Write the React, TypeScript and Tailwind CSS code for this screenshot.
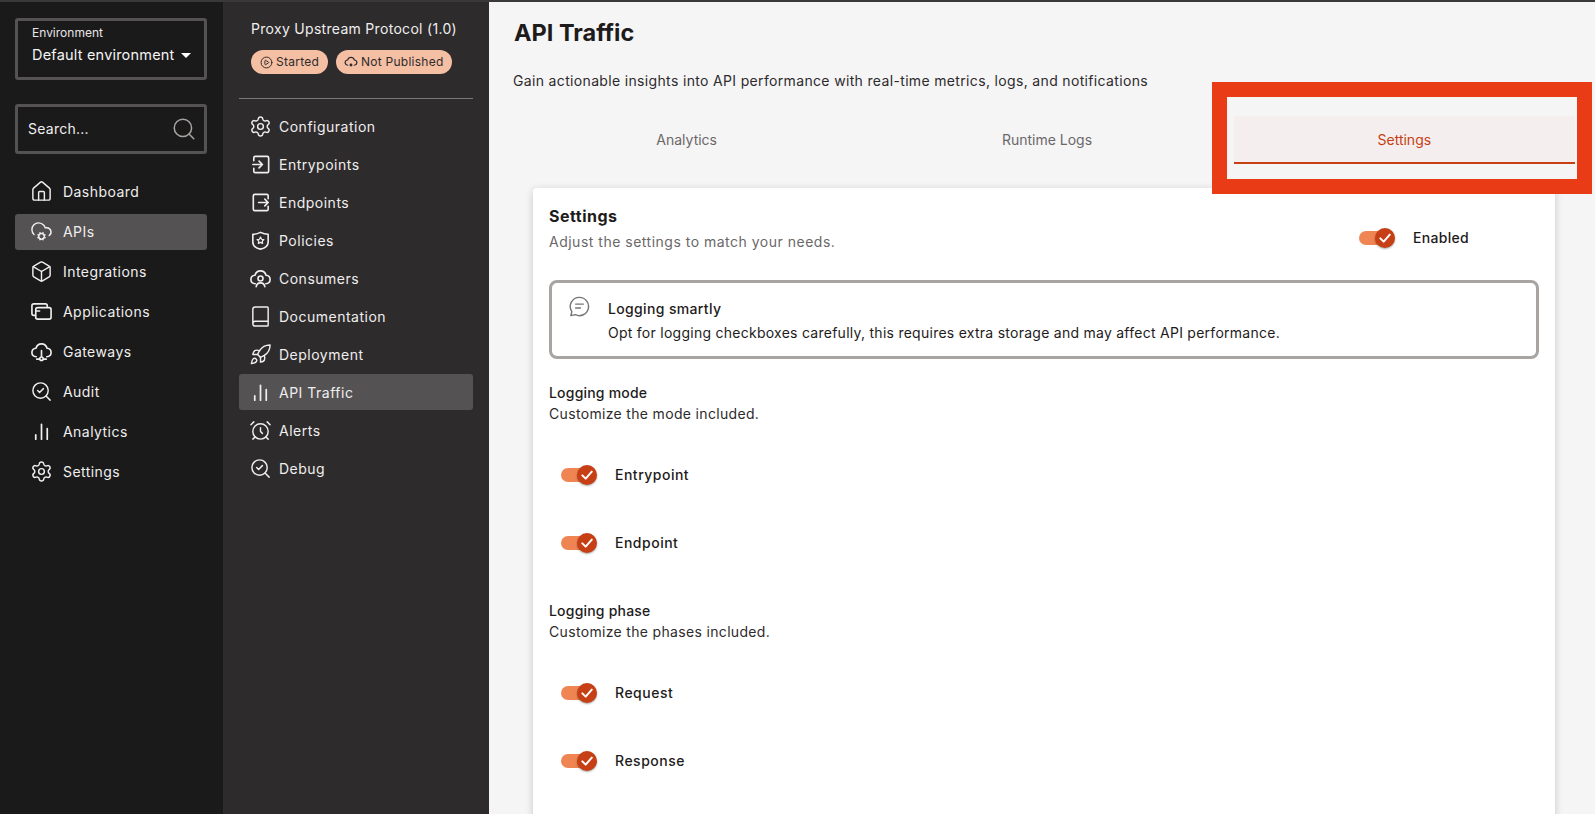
import React from 'react';
import { AlarmClock, Book, Box, CirclePlay, CloudCog, House, Rocket, Search, SearchCheck, Settings } from 'lucide-react';

type IconType = React.ComponentType<{ className?: string; strokeWidth?: number }>;

const baseSvg = {
  viewBox: '0 0 24 24',
  fill: 'none',
  stroke: 'currentColor',
  strokeWidth: 1.7,
  strokeLinecap: 'round' as const,
  strokeLinejoin: 'round' as const,
};

const CLOUD = 'M6.5 17.5C3.8 17.2 2 15.3 2 13c0-2.3 1.8-4.2 4.2-4.4C7 5.8 9.3 4 12 4s5 1.8 5.8 4.6c2.4.2 4.2 2.1 4.2 4.4 0 2.3-1.8 4.2-4.5 4.5';

const BarsIcon = ({ className }: { className?: string }) => (
  <svg {...baseSvg} className={className} strokeWidth={1.8}>
    <path d="M6 15.5v4.500M12 4.500V20M18 9v11" />
  </svg>
);

const AppsIcon = ({ className }: { className?: string }) => (
  <svg {...baseSvg} className={className}>
    <path d="M5 16H4a2 2 0 0 1-2-2V6a2 2 0 0 1 2-2h12a2 2 0 0 1 2 2v1" />
    <rect x="6" y="8" width="16" height="12" rx="2" />
    <path d="M6 11.5h4" />
  </svg>
);

const GatewayIcon = ({ className }: { className?: string }) => (
  <svg {...baseSvg} className={className}>
    <path d={CLOUD} />
    <path d="M12 11v6M7 20h3M14 20h3" />
    <circle cx="12" cy="19.5" r="1.8" />
  </svg>
);

const EntryIcon = ({ className }: { className?: string }) => (
  <svg {...baseSvg} className={className}>
    <path d="M5 8V5a1.5 1.5 0 0 1 1.5-1.5H19A1.5 1.5 0 0 1 20.5 5v14a1.5 1.5 0 0 1-1.5 1.5H6.5A1.5 1.5 0 0 1 5 19v-3" />
    <path d="M4 12h10M10.5 8.5 14 12l-3.5 3.5" />
  </svg>
);

const EndIcon = ({ className }: { className?: string }) => (
  <svg {...baseSvg} className={className}>
    <path d="M20 8V5a1.5 1.5 0 0 0-1.5-1.5H6A1.5 1.5 0 0 0 4.5 5v14A1.5 1.5 0 0 0 6 20.5h12.5A1.5 1.5 0 0 0 20 19v-3" />
    <path d="M10 12h10M16.5 8.5 20 12l-3.5 3.5" />
  </svg>
);

const PolicyIcon = ({ className }: { className?: string }) => (
  <svg {...baseSvg} className={className}>
    <path d="M4 5.5C7 5.5 9.5 4.8 12 3.5c2.5 1.3 5 2 8 2v8c0 4-3.5 6.5-8 7.5-4.5-1-8-3.5-8-7.5z" />
    <path d="m12 8.5 1.1 2.2 2.4.3-1.7 1.7.4 2.4-2.2-1.1-2.2 1.1.4-2.4L8.5 11l2.4-.3z" strokeWidth={1.3} />
  </svg>
);

const ConsumerIcon = ({ className }: { className?: string }) => (
  <svg {...baseSvg} className={className}>
    <path d={CLOUD} />
    <circle cx="12" cy="12" r="2.6" />
    <path d="M7.5 20.5c.5-2.5 2.3-4 4.5-4s4 1.5 4.5 4" />
  </svg>
);

const ChatIcon = ({ className }: { className?: string }) => (
  <svg {...baseSvg} className={className} strokeWidth={1.5}>
    <path d="M12 2.5a9.5 9.5 0 1 1-4.3 18l-4.7 1 1-4.2A9.5 9.5 0 0 1 12 2.5z" />
    <path d="M8 9.5h8M8 13.5h5" />
  </svg>
);

const CloudOffIcon = ({ className }: { className?: string }) => (
  <svg {...baseSvg} className={className} strokeWidth={2}>
    <path d={CLOUD} />
    <circle cx="12" cy="17" r="1.5" fill="currentColor" />
  </svg>
);

const mainNav: { label: string; icon: IconType; active?: boolean }[] = [
  { label: 'Dashboard', icon: House },
  { label: 'APIs', icon: CloudCog, active: true },
  { label: 'Integrations', icon: Box },
  { label: 'Applications', icon: AppsIcon },
  { label: 'Gateways', icon: GatewayIcon },
  { label: 'Audit', icon: SearchCheck },
  { label: 'Analytics', icon: BarsIcon },
  { label: 'Settings', icon: Settings },
];

const apiNav: { label: string; icon: IconType; active?: boolean }[] = [
  { label: 'Configuration', icon: Settings },
  { label: 'Entrypoints', icon: EntryIcon },
  { label: 'Endpoints', icon: EndIcon },
  { label: 'Policies', icon: PolicyIcon },
  { label: 'Consumers', icon: ConsumerIcon },
  { label: 'Documentation', icon: Book },
  { label: 'Deployment', icon: Rocket },
  { label: 'API Traffic', icon: BarsIcon, active: true },
  { label: 'Alerts', icon: AlarmClock },
  { label: 'Debug', icon: SearchCheck },
];

function Toggle() {
  return (
    <span className="relative block h-[20px] w-[36px] shrink-0">
      <span className="absolute left-0 top-[3px] h-[14px] w-[30px] rounded-full bg-[#f08554]" />
      <span className="absolute right-0 top-0 flex h-[20px] w-[20px] items-center justify-center rounded-full bg-[#c73f14] shadow-[0_1px_2px_rgba(0,0,0,0.35)]">
        <svg viewBox="0 0 12 12" className="h-[16px] w-[16px]" fill="none" stroke="white" strokeWidth={1.5} strokeLinecap="round" strokeLinejoin="round">
          <path d="M2.5 6.3 5 8.7l4.6-5.2" />
        </svg>
      </span>
    </span>
  );
}

function ToggleRow({ label, className }: { label: string; className: string }) {
  return (
    <div className={`flex items-center gap-[18px] pl-[12px] ${className}`}>
      <Toggle />
      <span className="text-[14px] font-medium leading-[20px] tracking-[0.5px] text-[#1e1b1b]">{label}</span>
    </div>
  );
}

export default function App() {
  return (
    <div className="flex h-screen w-full overflow-hidden border-t-2 border-[#3a3839] bg-[#f6f5f6] font-['Inter','Noto_Sans',sans-serif] text-[14px]">
      <aside className="flex w-[223px] shrink-0 flex-col bg-[#1a1a1a] pl-[15px] pr-[16px] pt-[16px] text-white">
        <div className="h-[62px] rounded-[3px] border-[3px] border-[#545253] pl-[14px] pt-[3px]">
          <div className="text-[12px] leading-[18px] text-[#e8e6e6]">Environment</div>
          <div className="mt-[3px] flex items-center gap-[6px] text-[14.5px] leading-[20px] tracking-[0.2px] text-[#f5f4f4]">
            Default environment
            <span className="mt-[1px] border-x-[5px] border-t-[5px] border-x-transparent border-t-white" />
          </div>
        </div>
        <div className="mt-[24px] flex h-[50px] items-center justify-between rounded-[3px] border-[3px] border-[#545253] pb-[1px] pl-[10px] pr-[7px]">
          <span className="tracking-[0.25px] text-[#f0eeee]">Search...</span>
          <Search className="h-[26px] w-[26px] text-[#a8a4a1]" strokeWidth={1.4} />
        </div>
        <nav className="mt-[20px] flex flex-col gap-[4px]">
          {mainNav.map(({ label, icon: Icon, active }) => (
            <div key={label} className={`flex h-[36px] items-center gap-[10px] rounded-[3px] pb-[1px] pl-[15px] text-[#f0eeee] ${active ? 'bg-[#545253]' : ''}`}>
              <Icon className="h-[23px] w-[23px] shrink-0" strokeWidth={1.5} />
              <span className="tracking-[0.45px]">{label}</span>
            </div>
          ))}
        </nav>
      </aside>

      <aside className="flex w-[266px] shrink-0 flex-col bg-[#2d2b2c] px-[16px] text-white">
        <div className="pl-[12px] pt-[17px]">
          <div className="leading-[20px] tracking-[0.3px] text-[#f0eeee]">Proxy Upstream Protocol (1.0)</div>
          <div className="mt-[11px] flex gap-[8px] text-[12px] leading-[24px] tracking-[0.25px] text-[#2d2b2c]">
            <span className="flex h-[24px] items-center gap-[3px] rounded-full bg-[#f5bfa4] px-[9px]">
              <CirclePlay className="h-[13px] w-[13px]" strokeWidth={1.8} />
              Started
            </span>
            <span className="flex h-[24px] items-center gap-[3px] rounded-full bg-[#f5bfa4] px-[8px]">
              <CloudOffIcon className="h-[14px] w-[14px]" />
              Not Published
            </span>
          </div>
        </div>
        <div className="mt-[24px] h-px bg-[#7a7878]" />
        <nav className="mt-[9px] flex flex-col gap-[2px]">
          {apiNav.map(({ label, icon: Icon, active }) => (
            <div key={label} className={`flex h-[36px] items-center gap-[7px] rounded-[3px] pl-[10px] text-[#f0eeee] ${active ? 'bg-[#545253]' : ''}`}>
              <Icon className="h-[23px] w-[23px] shrink-0" strokeWidth={1.5} />
              <span className="tracking-[0.5px]">{label}</span>
            </div>
          ))}
        </nav>
      </aside>

      <main className="relative min-w-0 flex-1 pl-[25px] pr-[20px]">
        <h1 className="mt-[15px] text-[23.5px] font-bold leading-[32px] text-[#1e1b1b]">API Traffic</h1>
        <p className="-ml-[1px] mt-[22px] leading-[20px] tracking-[0.34px] text-[#2d2b2c]">Gain actionable insights into API performance with real-time metrics, logs, and notifications</p>

        <div className="ml-[3px] mt-[25px] grid grid-cols-3 gap-[17px]">
          <div className="flex h-[48px] items-center justify-center pb-[1px] pr-[2px] text-[#6b6868]">Analytics</div>
          <div className="flex h-[48px] items-center justify-center pb-[1px] pl-[2px] text-[#6b6868]">Runtime Logs</div>
          <div className="flex h-[48px] items-center justify-center border-b-2 border-[#c73f14] bg-[#f4eeee] text-[#c73f14]">Settings</div>
        </div>

        <section className="ml-[19px] mr-[20px] mt-[24px] h-[640px] rounded-[4px] bg-white px-[16px] pt-[16px] shadow-[0_2px_8px_rgba(0,0,0,0.18)]">
          <div className="flex items-start justify-between">
            <div>
              <h2 className="text-[16px] font-bold leading-[24px] tracking-[0.5px] text-[#1e1b1b]">Settings</h2>
              <p className="mt-[4px] leading-[20px] tracking-[0.5px] text-[#6b6868]">Adjust the settings to match your needs.</p>
            </div>
            <div className="mr-[70px] mt-[24px] flex items-center gap-[18px]">
              <Toggle />
              <span className="font-medium leading-[20px] tracking-[0.3px] text-[#1e1b1b]">Enabled</span>
            </div>
          </div>

          <div className="mt-[28px] flex h-[79px] rounded-[8px] border-[3px] border-[#a8a4a1] pl-[16px] pt-[12px]">
            <ChatIcon className="h-[23px] w-[23px] shrink-0 text-[#787474]" />
            <div className="ml-[17px] pt-[4px]">
              <div className="font-medium leading-[20px] tracking-[0.35px] text-[#1e1b1b]">Logging smartly</div>
              <div className="mt-[4px] leading-[20px] tracking-[0.26px] text-[#1e1b1b]">Opt for logging checkboxes carefully, this requires extra storage and may affect API performance.</div>
            </div>
          </div>

          <div className="mt-[24px] font-medium leading-[20px] tracking-[0.2px] text-[#1e1b1b]">Logging mode</div>
          <div className="mt-[1px] leading-[20px] tracking-[0.33px] text-[#2d2b2c]">Customize the mode included.</div>
          <ToggleRow label="Entrypoint" className="mt-[41px]" />
          <ToggleRow label="Endpoint" className="mt-[48px]" />

          <div className="mt-[48px] font-medium leading-[20px] tracking-[0.2px] text-[#1e1b1b]">Logging phase</div>
          <div className="mt-[1px] leading-[20px] tracking-[0.33px] text-[#2d2b2c]">Customize the phases included.</div>
          <ToggleRow label="Request" className="mt-[41px]" />
          <ToggleRow label="Response" className="mt-[48px]" />
        </section>

        <div className="pointer-events-none absolute left-[723px] top-[80px] h-[112px] w-[380px] border-[15px] border-[#ea3b17]" />
      </main>
    </div>
  );
}
